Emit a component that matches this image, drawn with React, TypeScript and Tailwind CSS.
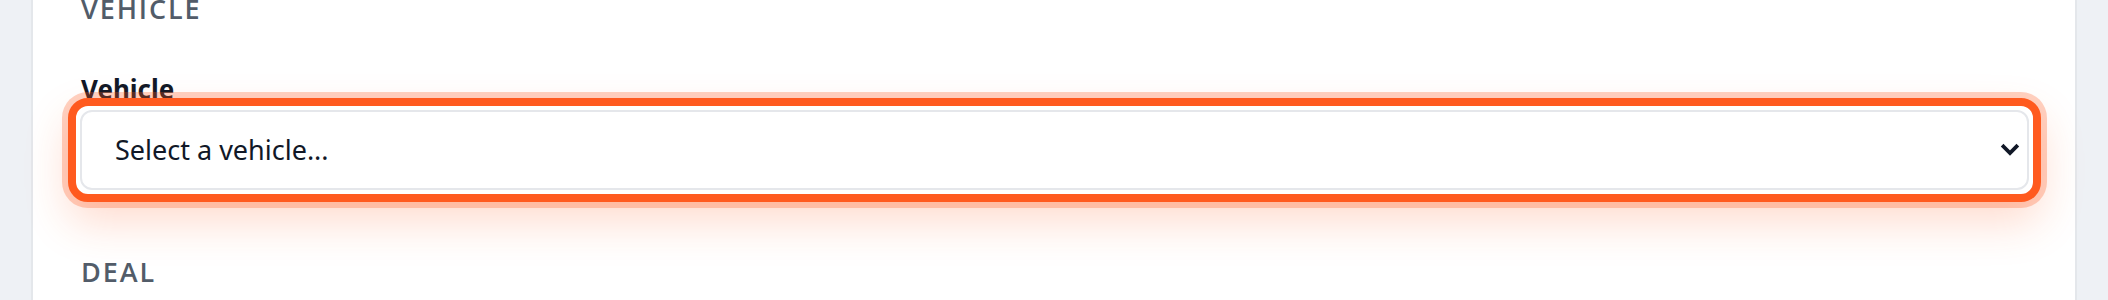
export default function App() {
  return (
    <div className="min-h-[300px] bg-[#eef1f5] px-[31px] font-['Noto_Sans',sans-serif] overflow-hidden">
      <div className="flow-root min-h-[300px] bg-white border-l-2 border-r-2 border-[#e4e7eb] pl-[48px] pr-[34px]">
        {/* Vehicle section */}
        <h2 className="-mt-[5px] font-['Open_Sans',sans-serif] text-[27px] leading-[28px] font-semibold tracking-[0.07em] uppercase text-[#525c69]">
          Vehicle
        </h2>

        <label className="block mt-[53px] -mb-[5px] text-[26px] leading-[27px] font-bold text-[#111827]">
          Vehicle
        </label>
        <div className="relative -ml-[13px] rounded-[20px] border-[8px] border-[#ff5a1f] p-[4px] bg-white shadow-[0_0_0_6px_rgba(255,90,31,0.28),0_20px_44px_rgba(255,90,31,0.22)]">
          <select
            defaultValue=""
            className="block w-full h-[80px] appearance-none rounded-[12px] border-2 border-[#e5e7eb] bg-white pl-[33px] pr-[60px] text-[27px] text-[#111827] outline-none"
          >
            <option value="">Select a vehicle...</option>
          </select>
          <svg
            className="pointer-events-none absolute right-[13px] top-1/2 -translate-y-1/2"
            width="20"
            height="14"
            viewBox="0 0 20 14"
            fill="none"
            stroke="#111827"
            strokeWidth="3.8"
            strokeLinecap="square"
          >
            <path d="M3.5 3.5L10 10L16.5 3.5" />
          </svg>
        </div>

        {/* Deal section */}
        <h2 className="mt-[56px] font-['Open_Sans',sans-serif] text-[27px] leading-[28px] font-semibold tracking-[0.07em] uppercase text-[#525c69]">
          Deal
        </h2>
      </div>
    </div>
  );
}
